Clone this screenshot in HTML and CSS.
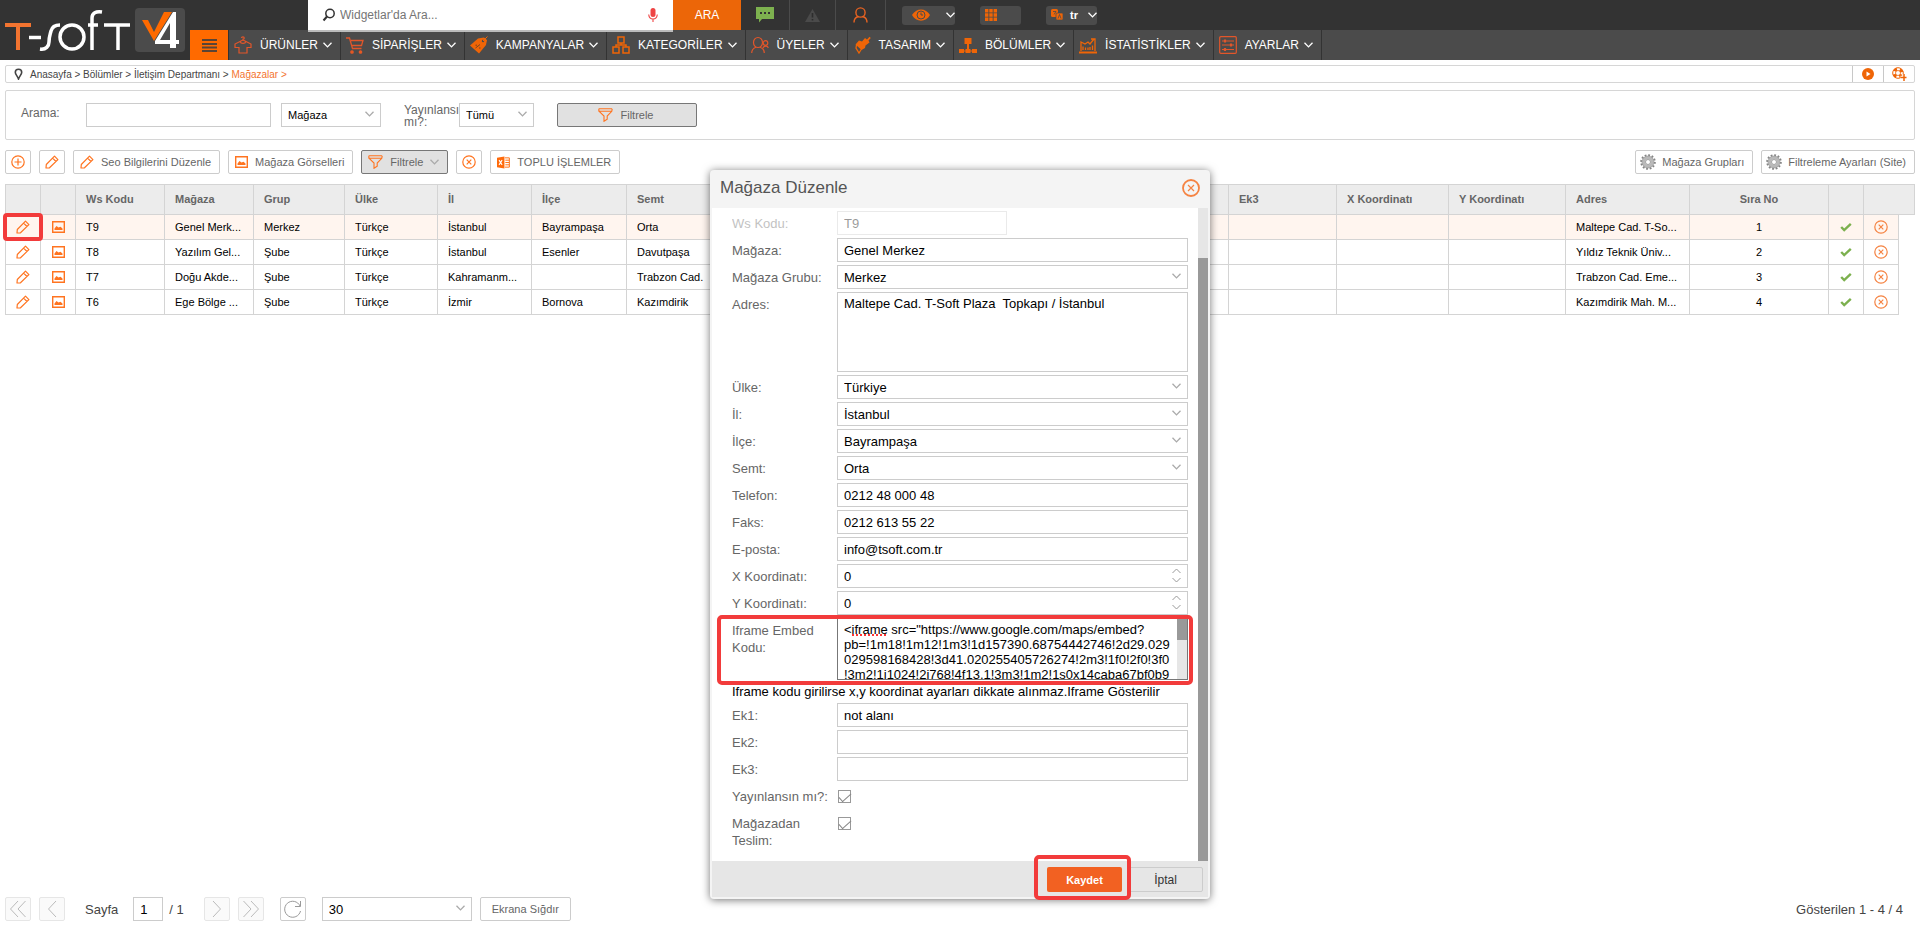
FILE: index.html
```html
<!DOCTYPE html>
<html lang="tr">
<head>
<meta charset="utf-8">
<title>Mağazalar</title>
<link rel="stylesheet" href="styles.css">
</head>
<body>
<svg class="sprite" aria-hidden="true">
  <symbol id="chev" viewBox="0 0 9 6"><path d="M.5.7 4.5 4.9 8.500.7" fill="none" stroke="currentColor" stroke-width="1.300"/></symbol>
  <symbol id="pencil" viewBox="0 0 14 14"><path d="M1 13 1.300 9.500 9.500 1.200 12.900 4.600 4.500 12.800ZM7.600 3.100 11 6.500" fill="none" stroke="currentColor" stroke-width="1.200" stroke-linejoin="round"/></symbol>
  <symbol id="image" viewBox="0 0 13 12"><path d="M.7.7h11.600v10.600H.700Z" fill="none" stroke="currentColor" stroke-width="1.400"/><path d="M2.500 9V7.500L4.500 5l2 1.500L8.500 5.800l2 1.700V9Z" fill="currentColor"/></symbol>
  <symbol id="funnel" viewBox="0 0 15 14"><path d="M.8.8h13.400M1 3.200.8.800M14.200.8 13.800 3.300 9.200 8v3.200L6 13.300V8L1.200 3.300h12.600" fill="none" stroke="currentColor" stroke-width="1.100"/></symbol>
  <symbol id="close" viewBox="0 0 14 14"><circle cx="7" cy="7" r="6.200" fill="none" stroke="currentColor" stroke-width="1.200"/><path d="M4.700 4.700l4.600 4.600M9.300 4.700 4.700 9.300" stroke="currentColor" stroke-width="1.200"/></symbol>
  <symbol id="check" viewBox="0 0 12 10"><path d="M1.200 5 4.200 8 10.800 1.800" fill="none" stroke="#7cb04e" stroke-width="2.400"/></symbol>
  <symbol id="gear" viewBox="0 0 16 16"><circle cx="8" cy="8" r="6.800" fill="none" stroke="#858585" stroke-width="2" stroke-dasharray="1.800 1.760"/><circle cx="8" cy="8" r="4.300" fill="#fff" stroke="#b9b9b9" stroke-width="3.200"/><circle cx="8" cy="8" r="2.500" fill="#fff" stroke="#8c8c8c" stroke-width=".8"/><circle cx="8" cy="8" r="6" fill="none" stroke="#8c8c8c" stroke-width=".6"/></symbol>
</svg>

<header class="header">
  <a class="logo" href="#" aria-label="T-Soft V4">
    <svg width="190" height="60" viewBox="0 0 190 60" fill="none">
      <path d="M5 25H31M18 25V50" stroke="#f37430" stroke-width="4"/>
      <path d="M29 37.500H41" stroke="#fff" stroke-width="3.500"/>
      <path d="M40 49C46 50 49 46 49 42C49 37 50 35 51 31C52 27 55 25 60 25" stroke="#fff" stroke-width="3.500"/>
      <ellipse cx="72" cy="37" rx="12" ry="12" stroke="#fff" stroke-width="3.500"/>
      <path d="M92 50V18C92 13 96 11 102 12M88 25H98M104 25H130M118 25V50" stroke="#fff" stroke-width="3.500"/>
      <rect x="135" y="8" width="50" height="44" rx="4" fill="#4b4b4b"/>
      <path d="M142 20H148L154 32L164 12H172L154 41Z" fill="#ff6a00"/>
      <path d="M173 12H176V40H179V44H176V48H170V44H155V41ZM170 23V40H160Z" fill="#fff" fill-rule="evenodd"/>
    </svg>
  </a>
  <div class="header-main">
    <div class="topbar">
      <form class="search">
        <svg width="14" height="14" viewBox="0 0 14 14" fill="none" stroke="#333" stroke-width="1.500"><circle cx="8" cy="5.500" r="4.200"/><path d="M5 8.500 1.500 12.500" stroke-width="2"/></svg>
        <input type="text" aria-label="Widget ara" placeholder="Widgetlar'da Ara...">
        <svg width="10" height="16" viewBox="0 0 10 16"><rect x="2.500" y="1" width="5" height="9" rx="2.500" fill="#ee4444"/><path d="M.7 7.500C1 11 3 12 5 12S9 11 9.300 7.500M5 12v3" fill="none" stroke="#ee4444" stroke-width="1.100"/></svg>
      </form>
      <button class="ara" type="button">ARA</button>
      <button class="top-icon first" type="button" aria-label="Mesajlar"><svg width="18" height="16" viewBox="0 0 18 16"><path d="M0 0h18v12H6L3 15.500V12H0Z" fill="#7db14f"/><path d="M4 6h2M8 6h2M12 6h2" stroke="#333" stroke-width="2"/></svg></button>
      <button class="top-icon" type="button" aria-label="Uyarılar"><svg width="15" height="13" viewBox="0 0 15 13"><path d="M7.500 0 15 13H0Z" fill="#4a4a4a"/><path d="M7.500 4v4.500M7.500 10v1.500" stroke="#2d2d2d" stroke-width="1.600"/></svg></button>
      <button class="top-icon wide" type="button" aria-label="Hesap"><svg width="15" height="16" viewBox="0 0 15 16" fill="none" stroke="#e96321" stroke-width="1.400"><circle cx="7.500" cy="5.500" r="4.600"/><path d="M1 15.500C1 11.500 3 10 5.500 9.500M14 15.500C14 11.500 12 10 9.500 9.500"/></svg></button>
      <div class="pills">
        <button class="pill pill-eye" type="button" aria-label="Görünüm"><svg width="18" height="12" viewBox="0 0 18 12"><path d="M0 6C4-1.500 14-1.500 18 6C14 13.500 4 13.500 0 6Z" fill="#ef6507"/><circle cx="9" cy="6" r="4" fill="none" stroke="#4b4b4b"/><path d="M9 3.500V6h2" fill="none" stroke="#4b4b4b"/></svg><svg class="pill-chev"><use href="#chev"/></svg></button>
        <button class="pill pill-grid" type="button" aria-label="Izgara"><svg width="12" height="12" viewBox="0 0 12 12" stroke="#ef6507" stroke-width="3.400" stroke-dasharray="3.400 .9"><path d="M0 1.800H12M0 6H12M0 10.200H12"/></svg></button>
        <button class="pill pill-lang" type="button"><svg width="12" height="12" viewBox="0 0 12 12"><rect x="0" y="0" width="7" height="8" rx="1.500" fill="#ef6507"/><rect x="5" y="4" width="7" height="7" rx="1" fill="#ef6507" stroke="#4b4b4b" stroke-width=".7"/><path d="M2 2.500h3L3 5.500M7 9.500l1.500-4 1.500 4" fill="none" stroke="#4b4b4b" stroke-width=".8"/></svg><b>tr</b><svg class="pill-chev"><use href="#chev"/></svg></button>
      </div>
    </div>
    <nav class="nav">
      <button class="burger" type="button" aria-label="Menü"><svg width="15" height="13" viewBox="0 0 15 13" stroke="#5a4436" stroke-width="2"><path d="M0 1H15M0 5H15M0 8.500H15M0 12H15"/></svg></button>
      <a href="#"><svg class="nav-icon" viewBox="0 0 18 18" fill="none" stroke="#e2562a" stroke-width="1.200"><path d="M6 5.500 1 8v3.500h4V17h8v-5.500h4V8l-5-2.500M6 5.500c1 2.500 5 2.500 6 0L9 4M6 5.500 9 4V3.200C10.800 3 10.500.8 9 .8C8 .8 7.500 1.300 7.500 2"/></svg>ÜRÜNLER<svg class="nav-chev"><use href="#chev"/></svg></a>
      <a href="#"><svg class="nav-icon" viewBox="0 0 18 18" fill="none" stroke="#e2562a" stroke-width="1.300"><path d="M0 2H3.500L6.500 12.500H15.500M5 4.500H17L15.500 9.500H6"/><circle cx="6" cy="16" r="1.200" fill="#ef6507"/><circle cx="14.500" cy="16" r="1.200" fill="#ef6507"/></svg>SİPARİŞLER<svg class="nav-chev"><use href="#chev"/></svg></a>
      <a href="#"><svg class="nav-icon" viewBox="0 0 18 18"><path d="M0 9.500 8 2.500 14 1.500 17 4 16 9 9 17.500Z" fill="#ef6507"/><circle cx="13" cy="5" r="1.200" fill="#4b4b4b"/><path d="M13 5 17.500.5" stroke="#ef6507"/><path d="M5.500 12 10 8.500M5.500 9.200h1.500M9 12h1.500" stroke="#7a431f"/></svg>KAMPANYALAR<svg class="nav-chev"><use href="#chev"/></svg></a>
      <a href="#"><svg class="nav-icon" viewBox="0 0 18 18" fill="none" stroke="#ef6507" stroke-width="1.500"><path d="M6 1h6v6H6ZM1 11h6v6H1ZM11 11h6v6H11ZM9 7v2M4 11V9h10v2"/></svg>KATEGORİLER<svg class="nav-chev"><use href="#chev"/></svg></a>
      <a href="#"><svg class="nav-icon" viewBox="0 0 18 18" fill="none" stroke="#e2562a" stroke-width="1.200"><ellipse cx="7" cy="6.500" rx="4.500" ry="5"/><path d="M.7 17C.7 13.500 3 12 5 11.300M13.300 17C13.300 13.500 11 12 9 11.300M12 12c.5-2 4.500-3 5.300 0"/><circle cx="14.500" cy="7" r="2.300"/></svg>ÜYELER<svg class="nav-chev"><use href="#chev"/></svg></a>
      <a href="#"><svg class="nav-icon" viewBox="0 0 18 18"><path d="M2.500 8.500 6 4.500 9 5.500 12 2 14 3.500 16.500.8 17.800 2 15.500 4.500 16.500 6.500 12.500 9.500 12 12 8.500 14Z" fill="#ef6507"/><path d="M3.500 9 3 12 6 17 8.500 13" fill="none" stroke="#ef6507" stroke-width="1.300"/></svg>TASARIM<svg class="nav-chev"><use href="#chev"/></svg></a>
      <a href="#"><svg class="nav-icon" viewBox="0 0 18 18" fill="#ef6507"><path d="M5.500 2h7v6h-7ZM8 8h2v6H8ZM0 13h5v4H0ZM6.500 13h5v4h-5ZM13 13h5v4h-5ZM0 14.500h18v1H0Z"/></svg>BÖLÜMLER<svg class="nav-chev"><use href="#chev"/></svg></a>
      <a href="#"><svg class="nav-icon" viewBox="0 0 18 18" fill="none" stroke="#ef6507" stroke-width="1.300"><path d="M0 16.500h18" stroke-width="2"/><path d="M2 15V6l4 2 3-2 2 2 4-5M12 3h4v12M4 14V10.500M6.500 14v-2.500M9 14v-2.500M11 14V11M13.500 14V9.500"/></svg>İSTATİSTİKLER<svg class="nav-chev"><use href="#chev"/></svg></a>
      <a href="#"><svg class="nav-icon" viewBox="0 0 18 18" fill="none" stroke="#e2562a" stroke-width="1.200"><rect x=".7" y=".7" width="16.600" height="16.600" rx="1"/><path d="M3 5h12M3 9h12M3 13.500h12"/><path d="M6 3.500v3M12 7.500v3M6 12v3" stroke-width="2.200"/></svg>AYARLAR<svg class="nav-chev"><use href="#chev"/></svg></a>
    </nav>
  </div>
</header>

<main class="page">
  <div class="crumbs">
    <svg width="9" height="12" viewBox="0 0 9 12"><path d="M4.500 1.200C2.500 1.200 1.300 2.500 1.300 4.300C1.300 6.500 3.500 8 4.500 11C5.500 8 7.700 6.500 7.700 4.300C7.700 2.500 6.500 1.200 4.500 1.200Z" fill="none" stroke="#444" stroke-width="1.600"/></svg>
    <span class="crumb-path"><a href="#">Anasayfa &gt;</a> <a href="#">Bölümler &gt;</a> <a href="#">İletişim Departmanı &gt;</a> <a class="current" href="#">Mağazalar &gt;</a></span>
    <button type="button" class="crumb-btn" aria-label="Oynat"><svg width="12" height="12" viewBox="0 0 12 12"><circle cx="6" cy="6" r="6" fill="#ef6507"/><path d="M4.500 3.500 8.500 6 4.500 8.500Z" fill="#fff"/></svg></button>
    <button type="button" class="crumb-btn" aria-label="Yardım"><svg width="15" height="14" viewBox="0 0 15 14" fill="none"><circle cx="6" cy="6" r="5.300" stroke="#ef6507" stroke-width="1"/><circle cx="6" cy="6" r="2.500" stroke="#ef6507" stroke-width=".8"/><circle cx="6" cy="6" r="4" stroke="#ef6507" stroke-width="3" stroke-dasharray="3.140 3.140" stroke-dashoffset="-1.570"/><path d="M12 7v7M8.500 10.500h6" stroke="#fff" stroke-width="3.500"/><path d="M12 7v7M8.500 10.500h6" stroke="#ef6507" stroke-width="1.500"/></svg></button>
  </div>

  <form class="filters">
    <label class="f-search" for="q">Arama:</label>
    <input id="q" class="box f-input" type="text">
    <span class="pick f-field"><select class="box" aria-label="Arama alanı"><option>Mağaza</option></select><svg><use href="#chev"/></svg></span>
    <label class="f-pub" for="pub">Yayınlansı mı?:</label>
    <span class="pick f-status"><select id="pub" class="box"><option>Tümü</option></select><svg><use href="#chev"/></svg></span>
    <button class="btn pressed f-go" type="button"><svg class="i-funnel"><use href="#funnel"/></svg>Filtrele</button>
  </form>

  <div class="toolbar">
    <button class="btn square" type="button" aria-label="Ekle"><svg width="14" height="14" viewBox="0 0 14 14" fill="none" stroke="currentColor" stroke-width="1.200"><circle cx="7" cy="7" r="6.200"/><path d="M7 3.500v7M3.500 7h7"/></svg></button>
    <button class="btn square" type="button" aria-label="Düzenle"><svg class="i-pencil"><use href="#pencil"/></svg></button>
    <button class="btn" type="button"><svg class="i-pencil"><use href="#pencil"/></svg>Seo Bilgilerini Düzenle</button>
    <button class="btn" type="button"><svg class="i-image"><use href="#image"/></svg>Mağaza Görselleri</button>
    <button class="btn pressed" type="button"><svg class="i-funnel"><use href="#funnel"/></svg>Filtrele<svg class="i-chev"><use href="#chev"/></svg></button>
    <button class="btn square" type="button" aria-label="Temizle"><svg class="i-close"><use href="#close"/></svg></button>
    <button class="btn" type="button"><svg width="13" height="13" viewBox="0 0 14 13"><path d="M0 1.500 8 0V13L0 11.500Z" fill="#ff6a0a"/><path d="M2.200 4 5.500 9M5.500 4 2.200 9" stroke="#fff" stroke-width="1.200"/><path d="M8.500 1.500h4.800v10H8.500M9 4h4M9 6.500h4M9 9h4" fill="none" stroke="#ff6a0a"/></svg>TOPLU İŞLEMLER</button>
    <span class="spacer"></span>
    <button class="btn gear" type="button"><svg class="i-gear"><use href="#gear"/></svg>Mağaza Grupları</button>
    <button class="btn gear" type="button"><svg class="i-gear"><use href="#gear"/></svg>Filtreleme Ayarları (Site)</button>
  </div>

  <table class="grid">
    <colgroup><col class="c35"><col class="c35"><col class="c89"><col class="c89"><col class="c91"><col class="c93"><col class="c94"><col class="c95"><col class="c95"><col><col class="c108"><col class="c112"><col class="c117"><col class="c124"><col class="c139"><col class="c35"><col class="c35"><col class="c16"></colgroup>
    <thead><tr><th></th><th></th><th>Ws Kodu</th><th>Mağaza</th><th>Grup</th><th>Ülke</th><th>İl</th><th>İlçe</th><th>Semt</th><th></th><th>Ek3</th><th>X Koordinatı</th><th>Y Koordinatı</th><th>Adres</th><th class="num">Sıra No</th><th></th><th colspan="2"></th></tr></thead>
    <tbody>
      <tr class="selected"><td class="ic marked"><svg class="i-pencil"><use href="#pencil"/></svg></td><td class="ic"><svg class="i-image"><use href="#image"/></svg></td><td>T9</td><td>Genel Merk...</td><td>Merkez</td><td>Türkçe</td><td>İstanbul</td><td>Bayrampaşa</td><td>Orta</td><td></td><td></td><td></td><td></td><td>Maltepe Cad. T-So...</td><td class="num">1</td><td class="ic"><svg class="i-check"><use href="#check"/></svg></td><td class="ic"><svg class="i-close"><use href="#close"/></svg></td></tr>
      <tr><td class="ic"><svg class="i-pencil"><use href="#pencil"/></svg></td><td class="ic"><svg class="i-image"><use href="#image"/></svg></td><td>T8</td><td>Yazılım Gel...</td><td>Şube</td><td>Türkçe</td><td>İstanbul</td><td>Esenler</td><td>Davutpaşa</td><td></td><td></td><td></td><td></td><td>Yıldız Teknik Üniv...</td><td class="num">2</td><td class="ic"><svg class="i-check"><use href="#check"/></svg></td><td class="ic"><svg class="i-close"><use href="#close"/></svg></td></tr>
      <tr><td class="ic"><svg class="i-pencil"><use href="#pencil"/></svg></td><td class="ic"><svg class="i-image"><use href="#image"/></svg></td><td>T7</td><td>Doğu Akde...</td><td>Şube</td><td>Türkçe</td><td>Kahramanm...</td><td></td><td>Trabzon Cad.</td><td></td><td></td><td></td><td></td><td>Trabzon Cad. Eme...</td><td class="num">3</td><td class="ic"><svg class="i-check"><use href="#check"/></svg></td><td class="ic"><svg class="i-close"><use href="#close"/></svg></td></tr>
      <tr><td class="ic"><svg class="i-pencil"><use href="#pencil"/></svg></td><td class="ic"><svg class="i-image"><use href="#image"/></svg></td><td>T6</td><td>Ege Bölge ...</td><td>Şube</td><td>Türkçe</td><td>İzmir</td><td>Bornova</td><td>Kazımdirik</td><td></td><td></td><td></td><td></td><td>Kazımdirik Mah. M...</td><td class="num">4</td><td class="ic"><svg class="i-check"><use href="#check"/></svg></td><td class="ic"><svg class="i-close"><use href="#close"/></svg></td></tr>
    </tbody>
  </table>

  <footer class="pager">
    <button class="pg off" type="button" disabled aria-label="İlk sayfa"><svg viewBox="0 0 18 18"><path d="M9 1 1.500 9 9 17M16.500 1 9 9l7.500 8"/></svg></button>
    <button class="pg off" type="button" disabled aria-label="Önceki sayfa"><svg viewBox="0 0 18 18"><path d="M13 1 5.500 9 13 17"/></svg></button>
    <label class="pg-label" for="pageno">Sayfa</label>
    <input id="pageno" class="box pg-no" type="text" value="1">
    <span class="pg-total">/ 1</span>
    <button class="pg off" type="button" disabled aria-label="Sonraki sayfa"><svg viewBox="0 0 18 18"><path d="M5 1 12.500 9 5 17"/></svg></button>
    <button class="pg off" type="button" disabled aria-label="Son sayfa"><svg viewBox="0 0 18 18"><path d="M1.500 1 9 9 1.500 17M9 1l7.500 8L9 17"/></svg></button>
    <button class="pg reload" type="button" aria-label="Yenile"><svg viewBox="0 0 18 18"><path d="M16.500 1V6.500H11M16 6A8 8 0 1 0 16.500 11"/></svg></button>
    <span class="pick pg-size"><select class="box" aria-label="Sayfa boyutu"><option>30</option></select><svg><use href="#chev"/></svg></span>
    <button class="btn" type="button">Ekrana Sığdır</button>
    <span class="spacer"></span>
    <span class="pg-info">Gösterilen 1 - 4 / 4</span>
  </footer>
</main>

<section class="modal" role="dialog" aria-labelledby="mt">
  <header class="modal-head">
    <h2 id="mt">Mağaza Düzenle</h2>
    <button type="button" aria-label="Kapat"><svg width="18" height="18" viewBox="0 0 18 18" fill="none" stroke="#f58342"><circle cx="9" cy="9" r="8" stroke-width="1.800"/><path d="M6 6l6 6M12 6l-6 6" stroke-width="1.200"/></svg></button>
  </header>
  <div class="modal-body">
    <form class="form">
      <div class="row faded"><label for="a1">Ws Kodu:</label><input id="a1" class="box short" value="T9" disabled></div>
      <div class="row"><label for="a2">Mağaza:</label><input id="a2" class="box" value="Genel Merkez"></div>
      <div class="row"><label for="a3">Mağaza Grubu:</label><span class="pick"><select id="a3" class="box"><option>Merkez</option></select><svg><use href="#chev"/></svg></span></div>
      <div class="row"><label for="a4">Adres:</label><textarea id="a4" class="box address">Maltepe Cad. T-Soft Plaza  Topkapı / İstanbul</textarea></div>
      <div class="row"><label for="a5">Ülke:</label><span class="pick"><select id="a5" class="box"><option>Türkiye</option></select><svg><use href="#chev"/></svg></span></div>
      <div class="row"><label for="a6">İl:</label><span class="pick"><select id="a6" class="box"><option>İstanbul</option></select><svg><use href="#chev"/></svg></span></div>
      <div class="row"><label for="a7">İlçe:</label><span class="pick"><select id="a7" class="box"><option>Bayrampaşa</option></select><svg><use href="#chev"/></svg></span></div>
      <div class="row"><label for="a8">Semt:</label><span class="pick"><select id="a8" class="box"><option>Orta</option></select><svg><use href="#chev"/></svg></span></div>
      <div class="row"><label for="a9">Telefon:</label><input id="a9" class="box" value="0212 48 000 48"></div>
      <div class="row"><label for="a10">Faks:</label><input id="a10" class="box" value="0212 613 55 22"></div>
      <div class="row"><label for="a11">E-posta:</label><input id="a11" class="box" value="info@tsoft.com.tr"></div>
      <div class="row"><label for="a12">X Koordinatı:</label><span class="pick spin"><input id="a12" class="box" value="0"><svg viewBox="0 0 9 15"><path d="M.5 5 4.500 1 8.500 5M.5 10l4 4 4-4"/></svg></span></div>
      <div class="row"><label for="a13">Y Koordinatı:</label><span class="pick spin"><input id="a13" class="box" value="0"><svg viewBox="0 0 9 15"><path d="M.5 5 4.500 1 8.500 5M.5 10l4 4 4-4"/></svg></span></div>
      <div class="row embed-row"><label for="a14">Iframe Embed Kodu:</label><span class="pick embed"><textarea id="a14" class="box" spellcheck="false">&lt;iframe src="https://www.google.com/maps/embed?
pb=!1m18!1m12!1m3!1d157390.68754442746!2d29.029
029598168428!3d41.020255405726274!2m3!1f0!2f0!3f0
!3m2!1i1024!2i768!4f13.1!3m3!1m2!1s0x14caba67bf0b9</textarea><span class="squiggle"></span><span class="mini-bar"><i></i></span></span></div>
      <p class="hint">Iframe kodu girilirse x,y koordinat ayarları dikkate alınmaz.Iframe Gösterilir</p>
      <div class="row"><label for="a15">Ek1:</label><input id="a15" class="box" value="not alanı"></div>
      <div class="row"><label for="a16">Ek2:</label><input id="a16" class="box"></div>
      <div class="row"><label for="a17">Ek3:</label><input id="a17" class="box"></div>
      <div class="row"><label for="a18">Yayınlansın mı?:</label><input id="a18" type="checkbox" checked></div>
      <div class="row"><label for="a19">Mağazadan Teslim:</label><input id="a19" type="checkbox" checked></div>
    </form>
    <div class="bar"><i></i></div>
  </div>
  <footer class="modal-foot">
    <button class="save" type="button">Kaydet</button>
    <button class="cancel" type="button">İptal</button>
  </footer>
</section>
</body>
</html>
```
FILE: styles.css
```css
* { box-sizing: border-box; }
body {
  margin: 0;
  min-height: 100vh;
  display: flex;
  flex-direction: column;
  position: relative;
  background: #fff;
  color: #000;
  font: 11px "Liberation Sans", Arial, sans-serif;
}
.sprite { position: absolute; width: 0; height: 0; }
svg { flex: none; display: block; }
button, input, select, textarea { font: inherit; margin: 0; }
button { cursor: pointer; }
a { color: inherit; text-decoration: none; }
.spacer { flex: 1; }

/* header */
.header { display: flex; background: #333; height: 60px; }
.logo { flex: none; }
.header-main { flex: 1; min-width: 0; }
.topbar { display: flex; height: 30px; padding-left: 118px; }
.search {
  width: 365px;
  display: flex;
  align-items: center;
  padding: 0 15px 0 14px;
  background: #fff;
  box-shadow: 0 2px 0 #bcbcbc;
  position: relative;
  z-index: 1;
}
.search input {
  flex: 1;
  min-width: 0;
  border: 0;
  padding: 0 4px;
  outline: 0;
  background: none;
  font-size: 12px;
}
.search input::placeholder { color: #757575; opacity: 1; }
.ara { width: 68px; border: 0; background: #ec6608; color: #fff; font-size: 12px; }
.top-icon {
  width: 46px;
  border: 0;
  border-right: 1px solid #4b4b4b;
  background: none;
  padding: 0;
  display: grid;
  place-items: center;
}
.top-icon.first { width: 49px; }
.top-icon.wide { width: 50px; }
.pills { display: flex; align-items: center; gap: 25px; padding-left: 16px; }
.pill {
  height: 19px;
  border: 0;
  border-radius: 3px;
  background: #4b4b4b;
  color: #fff;
  display: flex;
  align-items: center;
  padding: 0 0 0 5px;
}
.pill-eye { width: 53px; padding-left: 10px; }
.pill-grid { width: 41px; }
.pill-lang { width: 51px; gap: 7px; }
.pill-chev { width: 9px; height: 6px; margin-left: auto; }
.nav { display: flex; height: 30px; background: #4b4b4b; }
.burger { width: 39px; border: 0; border-right: 1px solid #333; background: #ff6a00; padding: 0; display: grid; place-items: center; }
.nav a {
  display: flex;
  align-items: center;
  padding: 0 8px 0 5px;
  border-right: 1px solid #333;
  color: #fff;
  font-size: 12px;
}
.nav-icon { width: 18px; height: 18px; margin-right: 8px; }
.nav-chev { width: 9px; height: 6px; margin-left: 5px; }

/* page */
.page { flex: 1; display: flex; flex-direction: column; padding: 5px 5px 16px; }
.crumbs {
  display: flex;
  align-items: stretch;
  height: 18px;
  border: 1px solid #d6d6d6;
  border-radius: 2px;
  padding-left: 8px;
  font-size: 10px;
  line-height: 17px;
  color: #444;
}
.crumbs > svg { align-self: center; }
.crumb-path { flex: 1; padding-left: 7px; }
.crumb-path .current { color: #f37430; }
.crumb-btn { width: 31px; border: 0; border-left: 1px solid #c8c8c8; background: none; padding: 0; display: grid; place-items: center; }
.box {
  width: 100%;
  height: 24px;
  border: 1px solid #ccc;
  border-radius: 0;
  background: #fff;
  color: #000;
  padding: 0 6px;
  outline: 0;
  appearance: none;
  display: block;
}
.pick { position: relative; display: block; }
.pick > svg { position: absolute; right: 7px; top: 8px; width: 9px; height: 6px; color: #aaa; pointer-events: none; }
.filters {
  display: flex;
  align-items: flex-start;
  height: 50px;
  margin-top: 7px;
  padding: 12px 15px;
  border: 1px solid #d6d6d6;
  border-radius: 2px;
  font-size: 12px;
  color: #666;
}
.f-search { width: 65px; padding-top: 3px; }
.f-input { width: 185px; }
.f-field { width: 100px; margin-left: 10px; font-size: 11px; }
.f-pub { width: 55px; margin-left: 23px; line-height: 12px; overflow: hidden; padding-top: 1px; }
.f-status { width: 75px; font-size: 11px; }
.f-go { width: 140px; margin-left: 23px; justify-content: center; }
.btn {
  height: 24px;
  display: flex;
  align-items: center;
  gap: 7px;
  padding: 0 8px 0 6px;
  border: 1px solid #ccc;
  border-radius: 2px;
  background: #fff;
  color: #666;
  font-size: 11px;
  white-space: nowrap;
}
.btn svg { color: #ff7420; }
.btn.pressed { background: #e1e1e1; border-color: #777; }
.btn.square { width: 26px; padding: 0; justify-content: center; }
.btn.gear { gap: 6px; padding-left: 4px; }
.btn .i-chev { width: 9px; height: 6px; color: #aaa; }
.i-pencil { width: 14px; height: 14px; color: #ff7420; }
.i-image { width: 13px; height: 12px; color: #ff7420; }
.i-close { width: 14px; height: 14px; color: #f58342; }
.i-funnel { width: 15px; height: 14px; }
.i-check { width: 12px; height: 10px; }
.i-gear { width: 16px; height: 16px; }
.toolbar { display: flex; gap: 8px; padding: 10px 0; }

/* table */
.grid { width: 100%; table-layout: fixed; border-collapse: collapse; }
.grid th, .grid td {
  border: 1px solid #d4d4d4;
  padding: 0 0 0 10px;
  text-align: left;
  white-space: nowrap;
  overflow: hidden;
}
.grid th { height: 30px; padding-bottom: 2px; background: #ececec; color: #666; }
.grid td { height: 25px; }
.grid .num { text-align: center; padding-left: 0; }
.grid .ic { padding: 0; }
.ic svg { margin: 0 auto; }
.selected td { background: #fff5ef; }
.grid .marked { position: relative; overflow: visible; }
.marked::after {
  content: "";
  position: absolute;
  inset: -2px -3px;
  border: 4px solid #f23b3b;
  border-radius: 4px;
}
.c16 { width: 16px; } .c35 { width: 35px; } .c89 { width: 89px; } .c91 { width: 91px; }
.c93 { width: 93px; } .c94 { width: 94px; } .c95 { width: 95px; } .c108 { width: 108px; }
.c112 { width: 112px; } .c117 { width: 117px; } .c124 { width: 124px; } .c139 { width: 139px; }

/* pager */
.pager { display: flex; align-items: center; margin-top: auto; font-size: 13px; color: #444; }
.pg { width: 26px; height: 24px; border: 1px solid #ccc; border-radius: 2px; background: #fff; padding: 0; display: grid; place-items: center; margin-right: 8px; }
.pg svg { width: 18px; height: 18px; fill: none; stroke: #999; stroke-width: 1; }
.pg.off { border-color: #e6e6e6; background: #fafafa; }
.pg.off svg { stroke: #bbb; }
.pg-label { margin: 0 15px 0 12px; }
.pg-no { width: 30px; }
.pg-total { margin: 0 20px 0 6px; }
.pg.reload { margin: 0 16px 0 8px; }
.pg-size { width: 150px; margin-right: 8px; }
.pager .btn { padding: 0 11px; }
.pg-info { margin-right: 12px; }

/* dialog */
.modal {
  position: absolute;
  top: 170px;
  left: 50%;
  width: 500px;
  margin-left: -250px;
  padding: 0 2px 2px;
  border-radius: 4px;
  background: #f4f4f4;
  box-shadow: 0 1px 8px rgba(0, 0, 0, .55);
  font-size: 13px;
  color: #666;
}
.modal-head { height: 38px; display: flex; align-items: center; justify-content: space-between; padding: 0 8px 2px; }
.modal-head h2 { margin: 0; font-size: 17px; font-weight: 400; color: #555; }
.modal-head button { border: 0; padding: 0; background: none; }
.modal-body { display: flex; background: #fff; }
.form { flex: 1; min-width: 0; padding: 3px 10px 12px 20px; display: flex; flex-direction: column; gap: 3px; }
.row { display: grid; grid-template-columns: 105px 1fr; align-items: start; min-height: 24px; }
.row label { padding: 4px 15px 0 0; line-height: 17px; }
.row label[for="a18"] { padding-right: 0; }
.row.faded { opacity: .4; }
.short { width: 170px; }
textarea.box { resize: none; overflow: hidden; line-height: 15px; padding: 3px 6px; }
.address { height: 80px; }
.spin > svg { top: 4px; height: 15px; fill: none; stroke: #999; }
.embed-row { position: relative; }
.embed-row::after {
  content: "";
  position: absolute;
  inset: -3px -5px -5px -15px;
  border: 4px solid #f23b3b;
  border-radius: 5px;
  pointer-events: none;
}
.embed textarea.box { height: 62px; border-color: #777; white-space: pre; }
.squiggle {
  position: absolute;
  left: 15px;
  top: 16px;
  width: 36px;
  height: 2px;
  background: repeating-linear-gradient(90deg, #f33 0 2px, transparent 2px 4px);
}
.mini-bar { position: absolute; top: 1px; right: 1px; bottom: 1px; width: 10px; background: #e6e6e6; }
.mini-bar i { display: block; height: 21px; background: #999; }
.hint { margin: 0; color: #000; line-height: 17px; }
input[type="checkbox"] {
  appearance: none;
  width: 13px;
  height: 13px;
  margin: 6px 0 0 1px;
  border: 1px solid #999;
  display: grid;
  place-items: center;
}
input[type="checkbox"]:checked::before {
  content: "";
  width: 11px;
  height: 5px;
  border: solid #888;
  border-width: 0 0 1px 1px;
  rotate: -42deg;
  translate: 0 -1px;
}
.bar { width: 10px; background: #999; }
.bar i { display: block; height: 50px; background: #e6e6e6; }
.modal-foot { display: flex; justify-content: flex-end; gap: 6px; padding: 6px 5px 5px; background: #e6e6e6; font-size: 12px; }
.modal-foot button { width: 75px; height: 25px; border-radius: 2px; }
.save { position: relative; border: 0; background: #f26122; color: #fff; font-size: 11px; font-weight: 700; }
.save::after {
  content: "";
  position: absolute;
  inset: -12px -9px -8px -13px;
  border: 4px solid #f23b3b;
  border-radius: 5px;
}
.cancel { border: 1px solid #ccc; background: #e6e6e6; color: #333; }
```
